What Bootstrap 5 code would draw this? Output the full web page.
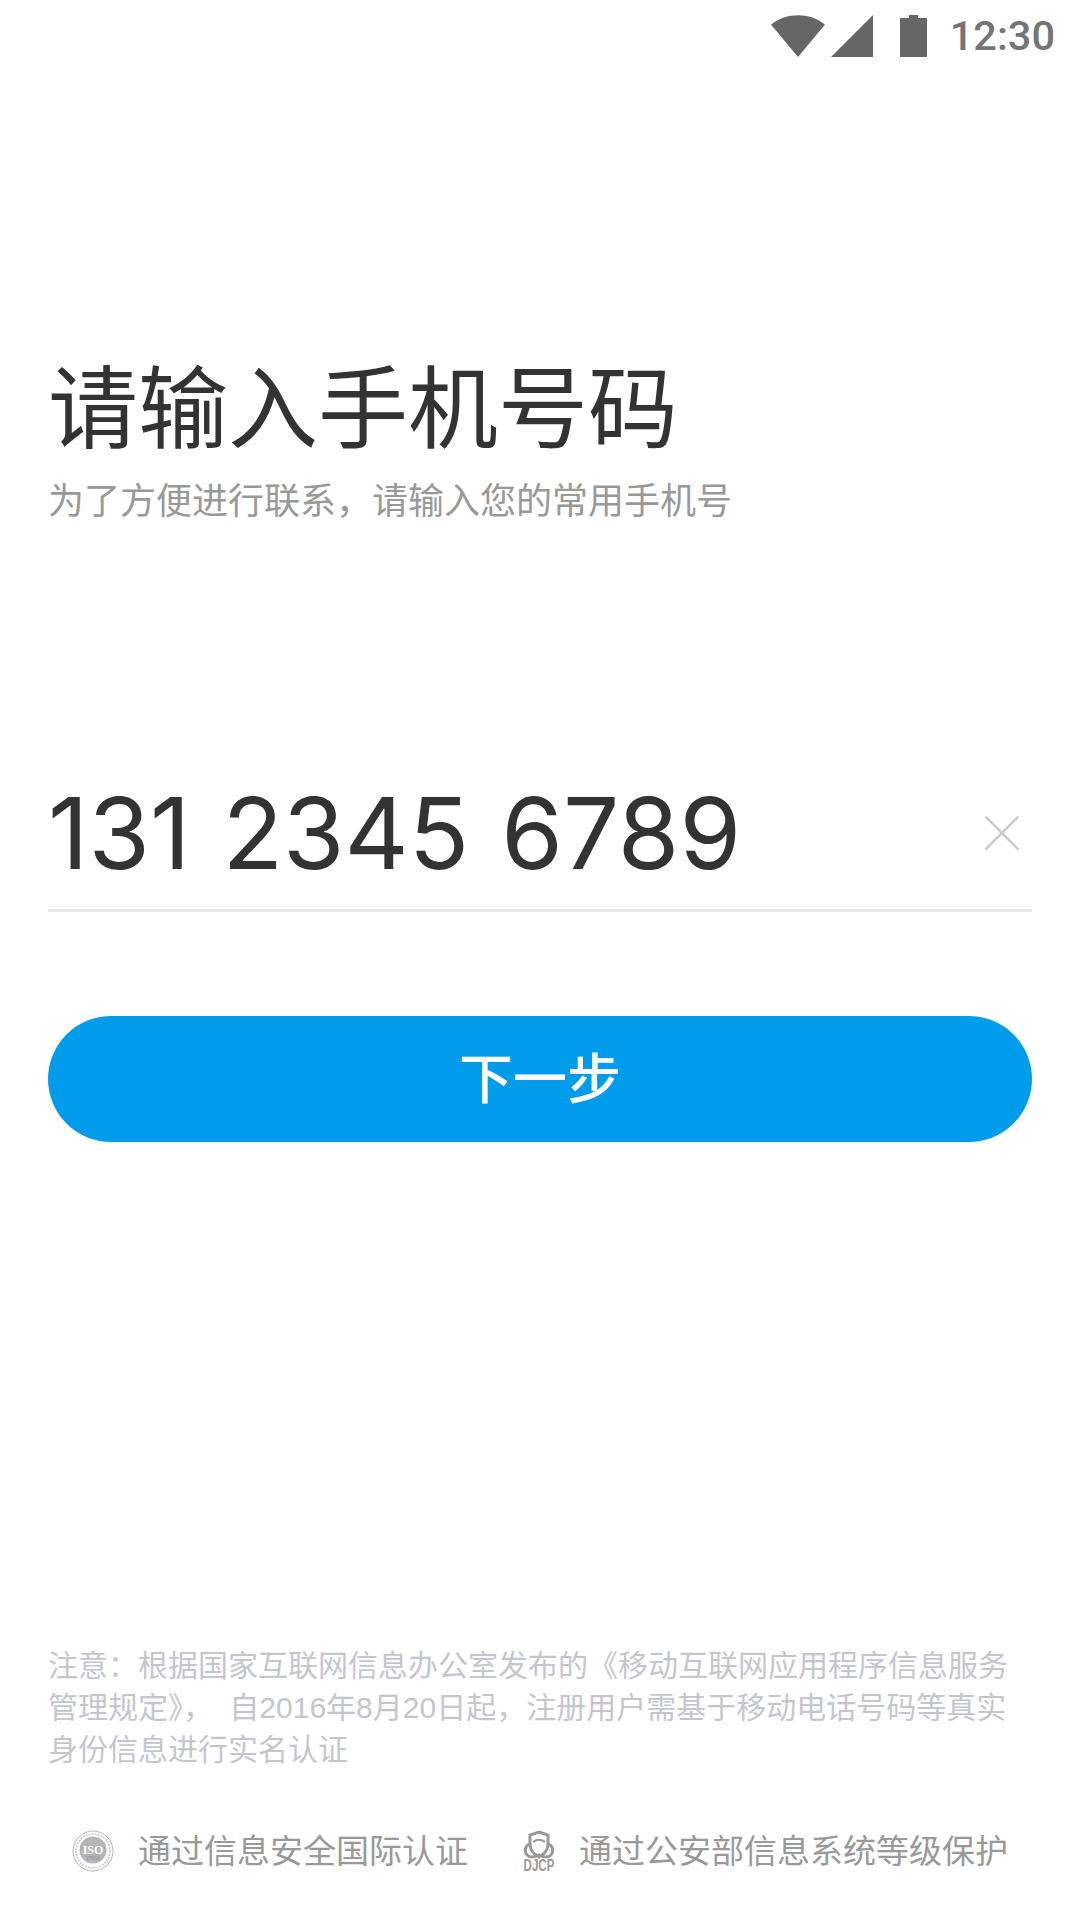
<!DOCTYPE html>
<html lang="zh-CN">
<head>
    <meta charset="UTF-8">
    <meta name="viewport" content="width=device-width, initial-scale=1.0">
    <title>请输入手机号码</title>
    <link href="https://cdn.jsdelivr.net/npm/bootstrap@5.3.0/dist/css/bootstrap.min.css" rel="stylesheet">
    <style>
        body {
            background: #fff;
            font-family: "Liberation Sans", "Noto Sans CJK SC", sans-serif;
        }
        .screen { width: 1080px; height: 1920px; overflow: hidden; }
        .status-bar { height: 72px; padding: 15px 25px 0 0; color: #757575; }
        .status-time { font-family: Roboto, sans-serif; font-weight: 500; font-size: 41.5px; line-height: 42px; margin-left: 23px; }
        .battery-icon { margin-left: 27px; }
        .main-pad { padding: 0 48px; }
        .head-title { margin: 288px 0 0; font-size: 90px; line-height: 100px; font-weight: 400; color: #333; }
        .head-sub { margin: 17px 0 0; font-size: 36px; line-height: 50px; color: #999; }
        .phone-row { margin-top: 233px; height: 152px; padding-bottom: 3px; border-bottom: 3px solid #e8e8e8; }
        .phone-num { font-family: Inter, sans-serif; font-size: 99.5px; line-height: 126px; word-spacing: 4px; color: #333; }
        .clear-x { margin-right: 12px; }
        .next-btn { margin-top: 104px; height: 126px; padding-top: 8px; border-radius: 63px; background: #009cec; border: 0; color: #fff; font-size: 54px; font-weight: 500; }
        .note-text { margin: 0; font-size: 30px; line-height: 42px; word-spacing: 8px; color: #c5c5d2; }
        .cert-row { margin-top: 56px; padding: 0 0 44px 24px; color: #999; font-size: 33px; }
        .cert-gap { margin-left: 55px; }
        .cert-label { margin-left: 24px; }
    </style>
</head>
<body>
    <div class="screen d-flex flex-column">
        <div class="status-bar d-flex justify-content-end">
            <svg width="54" height="42" viewBox="0 0 54 42"><path d="M0 9.5C15-3 39-3 54 9.5L27 42Z" fill="#666"/></svg>
            <svg class="ms-1" width="44" height="42" viewBox="0 0 44 42"><path d="M44 0V42H2Z" fill="#666"/></svg>
            <svg class="battery-icon" width="27" height="42" viewBox="0 0 27 42"><path d="M0 3H9V0H18V3H27V42H0Z" fill="#666"/></svg>
            <span class="status-time">12:30</span>
        </div>

        <div class="main-pad flex-grow-1 d-flex flex-column">
            <h1 class="head-title">请输入手机号码</h1>
            <p class="head-sub">为了方便进行联系，请输入您的常用手机号</p>

            <div class="phone-row d-flex justify-content-between align-items-center">
                <span class="phone-num">131 2345 6789</span>
                <svg class="clear-x" width="36" height="36" viewBox="0 0 36 36"><path d="M1.5 1.5L34.5 34.5M34.5 1.5L1.5 34.5" stroke="#ccc" stroke-width="2.5" fill="none"/></svg>
            </div>

            <button class="btn next-btn w-100" type="button">下一步</button>

            <div class="mt-auto">
                <p class="note-text">注意：根据国家互联网信息办公室发布的《移动互联网应用程序信息服务<br>管理规定》， 自2016年8月20日起，注册用户需基于移动电话号码等真实<br>身份信息进行实名认证</p>
                <div class="cert-row d-flex align-items-center">
                    <svg width="42" height="42" viewBox="0 0 42 42">
                        <circle cx="21" cy="21" r="20" fill="none" stroke="#b4b4bc" stroke-width="1"/>
                        <circle cx="21" cy="21" r="17" fill="none" stroke="#c8c8d0" stroke-width="1.5" stroke-dasharray="2 1"/>
                        <circle cx="21" cy="20" r="13.5" fill="#b5b5b5"/>
                        <text x="21" y="24" text-anchor="middle" font-family="Liberation Serif" font-weight="700" font-size="12" fill="#fff">ISO</text>
                        <text x="21" y="30" text-anchor="middle" font-family="Liberation Sans" font-size="5" fill="#7f8fa8">27001</text>
                    </svg>
                    <span class="cert-label">通过信息安全国际认证</span>
                    <svg class="cert-gap" width="32" height="48" viewBox="0 -4 32 48">
                        <path d="M16 1L25 4V13C25 20 20 24 16 26C12 24 7 20 7 13V4Z" fill="none" stroke="#999" stroke-width="3"/>
                        <path d="M10 11C14 8 18 8 22 11" fill="none" stroke="#999" stroke-width="2"/>
                        <path d="M7 13C0 15 1 26 9 26C12 26 14 25 16 24C18 25 20 26 23 26C31 26 32 15 25 13" fill="none" stroke="#999" stroke-width="3"/>
                        <text transform="translate(16 40) scale(1.05 1.45)" text-anchor="middle" font-family="Liberation Sans" font-weight="700" font-size="11" fill="#999">DJCP</text>
                    </svg>
                    <span class="cert-label">通过公安部信息系统等级保护</span>
                </div>
            </div>
        </div>
    </div>
    <script src="https://cdn.jsdelivr.net/npm/bootstrap@5.3.0/dist/js/bootstrap.bundle.min.js"></script>
</body>
</html>
